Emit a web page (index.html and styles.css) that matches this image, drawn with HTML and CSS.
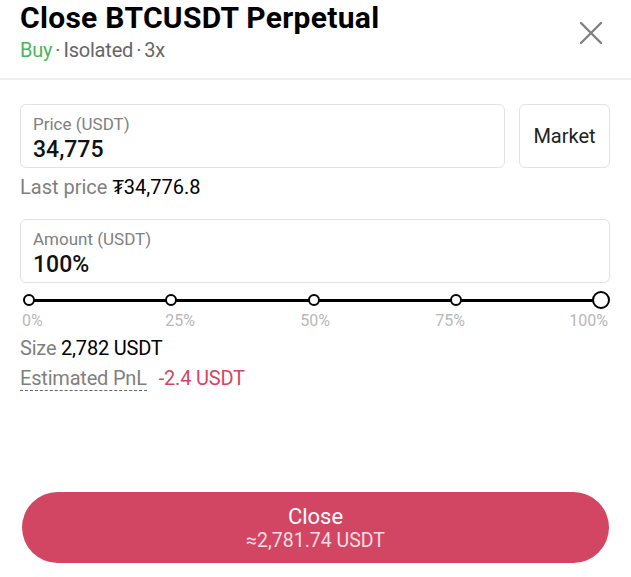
FILE: index.html
```html
<!DOCTYPE html>
<html lang="en">
<head>
    <meta charset="UTF-8">
    <meta name="viewport" content="width=device-width, initial-scale=1.0">
    <title>Close position</title>
    <link rel="stylesheet" href="styles.css">
</head>
<body>
    <div class="sheet">
        <div class="header">
            <div>
                <h1 class="title">Close BTCUSDT Perpetual</h1>
                <div class="subtitle"><span class="buy">Buy</span><span class="dot">·</span>Isolated<span class="dot">·</span>3x</div>
            </div>
            <button class="close-btn" aria-label="close">
                <svg width="24" height="24" viewBox="0 0 24 24"><path d="M2 2 L22 22 M22 2 L2 22" stroke="#808080" stroke-width="2.4" stroke-linecap="round" fill="none"/></svg>
            </button>
        </div>

        <div class="body">
            <div class="price-row">
                <div class="field grow">
                    <div class="field-label">Price (USDT)</div>
                    <div class="field-value">34,775</div>
                </div>
                <button class="market">Market</button>
            </div>
            <div class="last-price">Last price <span class="dark">₮34,776.8</span></div>

            <div class="field">
                <div class="field-label">Amount (USDT)</div>
                <div class="field-value">100%</div>
            </div>

            <div class="slider">
                <div class="track">
                    <span class="knob"></span>
                    <span class="knob"></span>
                    <span class="knob"></span>
                    <span class="knob"></span>
                    <span class="knob big"></span>
                </div>
                <div class="ticks">
                    <span>0%</span>
                    <span>25%</span>
                    <span>50%</span>
                    <span>75%</span>
                    <span>100%</span>
                </div>
            </div>

            <div class="info">Size <span class="dark">2,782 USDT</span></div>
            <div class="info"><span class="dashed">Estimated PnL</span><span class="loss">-2.4 USDT</span></div>
        </div>

        <button class="submit">
            <span class="submit-main">Close</span>
            <span class="submit-sub">≈2,781.74 USDT</span>
        </button>
    </div>
</body>
</html>
```

FILE: styles.css
```css
body {
  font-family: Roboto, "Noto Sans", sans-serif;
  margin: 0;
  padding: 0;
  background-color: #fff;
  color: #000;
}

.sheet {
  width: 631px;
  height: 577px;
  display: flex;
  flex-direction: column;
}

.header {
  display: flex;
  justify-content: space-between;
  align-items: flex-start;
  padding: 1px 20px 0 20px;
  height: 77px;
  border-bottom: 2px solid #efefef;
}

.title {
  margin: 0;
  font-size: 30px;
  font-weight: 700;
  line-height: 34px;
  letter-spacing: 0.3px;
}

.subtitle {
  margin-top: 2px;
  font-size: 20px;
  line-height: 26px;
  color: #666;
  letter-spacing: -0.2px;
}

.buy {
  color: #4cb55a;
}

.dot {
  padding: 0 3px;
}

.close-btn {
  background: none;
  border: none;
  padding: 0;
  margin-top: 20px;
  margin-right: 8px;
  cursor: pointer;
}

.body {
  padding: 24px 21px 0 20px;
  flex-grow: 1;
}

.price-row {
  display: flex;
  gap: 14px;
}

.grow {
  flex-grow: 1;
}

.field {
  border: 1px solid #e2e2e2;
  border-radius: 6px;
  height: 64px;
  box-sizing: border-box;
  padding: 9px 12px 0 12px;
}

.field-label {
  font-size: 17px;
  line-height: 20px;
  color: #808080;
}

.field-value {
  margin-top: 2px;
  font-size: 23px;
  line-height: 28px;
  font-weight: 500;
  color: #111;
}

.market {
  width: 91px;
  height: 64px;
  border: 1px solid #e2e2e2;
  border-radius: 6px;
  background: #fff;
  font-family: inherit;
  font-size: 20px;
  color: #222;
  padding: 0;
}

.last-price {
  font-size: 20px;
  line-height: 24px;
  color: #808080;
  margin: 7px 0 20px 0;
}

.dark {
  color: #000;
}

.slider {
  margin-top: 8px;
}

.track {
  position: relative;
  height: 18px;
  display: flex;
  justify-content: space-between;
  align-items: center;
  margin: 0 0 0 3px;
}

.track::before {
  content: "";
  position: absolute;
  left: 6px;
  right: 8px;
  top: 8px;
  height: 3px;
  background: #000;
}

.knob {
  position: relative;
  width: 8px;
  height: 8px;
  border: 2.5px solid #000;
  border-radius: 50%;
  background: #fff;
}

.knob.big {
  width: 14px;
  height: 14px;
}

.ticks {
  display: flex;
  justify-content: space-between;
  font-size: 16px;
  line-height: 18px;
  color: #b8b8b8;
  margin-top: 3px;
}

.ticks span {
  width: 46px;
  text-align: center;
}

.ticks span:first-child {
  text-align: left;
  margin-left: 2px;
}

.ticks span:last-child {
  text-align: right;
  margin-right: 2px;
}

.info {
  font-size: 20px;
  line-height: 24px;
  color: #808080;
  margin-top: 6px;
  letter-spacing: -0.2px;
}

.dashed {
  border-bottom: 1px dashed #666;
}

.loss {
  color: #d8445f;
  margin-left: 12px;
}

.submit {
  margin: 0 22px 14px 22px;
  height: 71px;
  border: none;
  border-radius: 36px;
  background: #d34663;
  color: #fff;
  font-family: inherit;
  display: flex;
  flex-direction: column;
  align-items: center;
  justify-content: center;
  cursor: pointer;
}

.submit-main {
  font-size: 22px;
  line-height: 26px;
}

.submit-sub {
  font-size: 19.5px;
  line-height: 22px;
  color: #f6dde2;
}
```
